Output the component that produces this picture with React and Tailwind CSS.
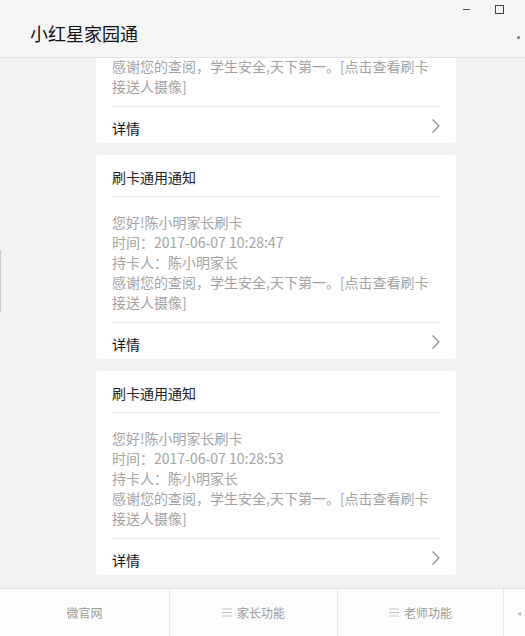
import React, { useLayoutEffect, useRef } from "react";

const font = { fontFamily: '"Noto Sans CJK SC", "Noto Sans", sans-serif' };

function Chevron() {
  return (
    <svg width="10" height="16" viewBox="0 0 10 16" className="block">
      <path d="M1.5 1.5 L8 8 L1.5 14.5" fill="none" stroke="#8a8a8a" strokeWidth="1.1" />
    </svg>
  );
}

function MenuIcon() {
  return (
    <svg width="10" height="9" viewBox="0 0 10 9" className="inline-block mr-[5px] align-[0px]">
      <path d="M0 1 H10 M0 4.5 H10 M0 8 H10" stroke="#c4c4c4" strokeWidth="1" />
    </svg>
  );
}

function Card({ time }) {
  return (
    <div className="bg-white rounded-[3px] w-[360px]">
      <div className="px-4">
        <div className="pt-[12px] pb-[9px] text-[14px] leading-[20px] text-[#222]">刷卡通用通知</div>
        <div className="h-px bg-[#e8e8e8]" />
        <div className="pt-[15px] pb-[10px] text-[14px] leading-[20px] text-[#a3a3a3]">
          <div>您好!陈小明家长刷卡</div>
          <div>时间：2017-06-07 {time}</div>
          <div>持卡人：陈小明家长</div>
          <div>感谢您的查阅，学生安全,天下第一。[点击查看刷卡</div>
          <div>接送人摄像]</div>
        </div>
        <div className="h-px bg-[#e8e8e8]" />
        <div className="pt-[11px] pb-[5px] flex items-center justify-between text-[14px] leading-[20px] text-[#111]">
          <span>详情</span>
          <span className="mr-[-1px] mt-[-4px]">
            <Chevron />
          </span>
        </div>
      </div>
    </div>
  );
}

export default function App() {
  const ref = useRef(null);
  useLayoutEffect(() => {
    if (ref.current) ref.current.scrollTop = 100000;
  }, []);
  return (
    <div className="relative h-[636px] w-[525px] flex flex-col bg-[#f2f2f2] overflow-hidden" style={font}>
      <div className="h-[58px] shrink-0 bg-[#f5f5f5] border-b border-[#e2e2e2] relative flex items-center">
        <div className="pl-[30px] pt-[8px] text-[18px] text-[#111] leading-[24px]">小红星家园通</div>
        <div className="absolute left-[463px] top-[9px] w-[7px] h-px bg-[#555]" />
        <div className="absolute left-[495px] top-[5px] w-[9px] h-[9px] border border-[#444]" />
        <div className="absolute left-[517px] top-[36px] w-[3px] h-[3px] rounded-full bg-[#777]" />
      </div>
      <div ref={ref} className="flex-1 overflow-hidden">
        <div className="pt-[12px] pb-[13px] pl-[96px] flex flex-col gap-[12px]">
          <Card time="10:28:41" />
          <Card time="10:28:47" />
          <Card time="10:28:53" />
        </div>
      </div>
      <div className="h-[48px] shrink-0 bg-[#fdfdfd] border-t border-[#e2e2e2] flex text-[12px] text-[#9a9a9a]">
        <div className="w-[169px] flex items-center justify-center">微官网</div>
        <div className="w-[168px] border-l border-[#e6e6e6] flex items-center justify-center">
          <MenuIcon />家长功能
        </div>
        <div className="w-[166px] border-l border-[#e6e6e6] flex items-center justify-center">
          <MenuIcon />老师功能
        </div>
        <div className="flex-1 border-l border-[#e6e6e6] flex items-center justify-end pr-[4px] text-[8px] text-[#bbb]">◂</div>
      </div>
      <div className="absolute left-0 top-[250px] w-px h-[62px] bg-[#c8c8c8]" />
    </div>
  );
}
